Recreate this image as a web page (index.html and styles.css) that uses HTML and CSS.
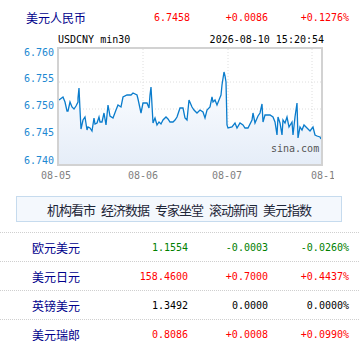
FILE: index.html
```html
<!DOCTYPE html>
<html lang="zh-CN">
<head>
<meta charset="UTF-8" />
<title>美元人民币</title>
<link rel="stylesheet" href="styles.css">
</head>
<body>
<div class="fx">
  <div class="quote">
    <span class="name">美元人民币</span>
    <span class="num up">6.7458</span>
    <span class="num up">+0.0086</span>
    <span class="num up">+0.1276%</span>
  </div>

  <div class="chart-title">
    <span>USDCNY min30</span>
    <span>2026-08-10 15:20:54</span>
  </div>

  <svg class="chart" width="334" height="144" viewBox="0 46 334 144">
    <defs>
      <linearGradient id="area" x1="0" y1="85" x2="0" y2="165" gradientUnits="userSpaceOnUse">
        <stop offset="0" stop-color="#fafcff" />
        <stop offset="1" stop-color="#e5edf8" />
      </linearGradient>
    </defs>
    <!-- grid -->
    <g class="grid">
      <line x1="59" y1="82" x2="321" y2="82" />
      <line x1="59" y1="109" x2="321" y2="109" />
      <line x1="59" y1="136" x2="321" y2="136" />
      <line x1="143" y1="49" x2="143" y2="164" />
      <line x1="228" y1="49" x2="228" y2="164" />
      <line x1="312" y1="49" x2="312" y2="164" />
    </g>
    <polygon class="area" points="59,100 63,97 65,102 67,111 68,111 70,102 72,107 74,109 76,106 78,102 78,98 79,88 80,110 81,129 83,120 85,117 87,130 88,127 90,128 92,131 94,118 95,124 97,123 99,117 100,122 102,122 104,113 106,125 108,105 110,116 113,118 116,110 118,105 121,107 123,97 127,95 131,95 133,93 137,95 138,99 141,113 143,103 147,103 149,108 150,95 151,87 152,105 153,123 155,118 157,125 159,122 161,124 163,120 166,117 168,119 170,122 173,122 175,120 177,117 180,108 183,108 185,118 187,120 189,100 192,107 194,110 197,113 200,110 203,112 205,118 207,110 210,107 212,97 213,102 215,100 217,105 219,100 221,95 222,85 224,72 225,76 226,82 227,125 228,128 232,127 235,123 237,128 240,123 243,125 245,128 248,128 252,120 253,113 255,123 258,116 260,113 262,104 263,122 265,115 270,115 273,117 275,122 277,135 278,117 280,123 282,135 283,120 285,123 287,117 289,127 292,122 293,135 295,117 297,103 298,138 300,127 302,130 304,125 307,128 310,131 313,127 315,135 317,136 320,137 321,139 321,164 59,164" />
    <polyline class="line" points="59,100 63,97 65,102 67,111 68,111 70,102 72,107 74,109 76,106 78,102 78,98 79,88 80,110 81,129 83,120 85,117 87,130 88,127 90,128 92,131 94,118 95,124 97,123 99,117 100,122 102,122 104,113 106,125 108,105 110,116 113,118 116,110 118,105 121,107 123,97 127,95 131,95 133,93 137,95 138,99 141,113 143,103 147,103 149,108 150,95 151,87 152,105 153,123 155,118 157,125 159,122 161,124 163,120 166,117 168,119 170,122 173,122 175,120 177,117 180,108 183,108 185,118 187,120 189,100 192,107 194,110 197,113 200,110 203,112 205,118 207,110 210,107 212,97 213,102 215,100 217,105 219,100 221,95 222,85 224,72 225,76 226,82 227,125 228,128 232,127 235,123 237,128 240,123 243,125 245,128 248,128 252,120 253,113 255,123 258,116 260,113 262,104 263,122 265,115 270,115 273,117 275,122 277,135 278,117 280,123 282,135 283,120 285,123 287,117 289,127 292,122 293,135 295,117 297,103 298,138 300,127 302,130 304,125 307,128 310,131 313,127 315,135 317,136 320,137 321,139" />
    <rect class="frame" x="58" y="48" width="264" height="117" />
    <text class="mark" x="271" y="152">sina.com</text>
    <!-- y axis -->
    <g class="y-axis">
      <text x="54" y="56">6.760</text>
      <text x="54" y="82">6.755</text>
      <text x="54" y="109">6.750</text>
      <text x="54" y="136">6.745</text>
      <text x="54" y="164">6.740</text>
    </g>
    <!-- x axis -->
    <g class="x-axis">
      <text x="41" y="179">08-05</text>
      <text x="128" y="179">08-06</text>
      <text x="212" y="179">08-07</text>
      <text x="311" y="179">08-1</text>
    </g>
  </svg>

  <div class="tabs">
    <a>机构看市</a>
    <a>经济数据</a>
    <a>专家坐堂</a>
    <a>滚动新闻</a>
    <a>美元指数</a>
  </div>

  <div class="rates">
    <div class="row">
      <span class="name">欧元美元</span>
      <span class="num down">1.1554</span>
      <span class="num down">-0.0003</span>
      <span class="num down">-0.0260%</span>
    </div>
    <div class="row">
      <span class="name">美元日元</span>
      <span class="num up">158.4600</span>
      <span class="num up">+0.7000</span>
      <span class="num up">+0.4437%</span>
    </div>
    <div class="row">
      <span class="name">英镑美元</span>
      <span class="num">1.3492</span>
      <span class="num">0.0000</span>
      <span class="num">0.0000%</span>
    </div>
    <div class="row">
      <span class="name">美元瑞郎</span>
      <span class="num up">0.8086</span>
      <span class="num up">+0.0008</span>
      <span class="num up">+0.0990%</span>
    </div>
  </div>
</div>
</body>
</html>
```

FILE: styles.css
```css
body {
  margin: 0;
  background: #fff;
  font-family: "Noto Sans CJK SC", sans-serif;
}
.fx {
  width: 359px;
}
.num {
  font-family: "DejaVu Sans Mono", monospace;
  font-size: 10px;
  text-align: right;
}
.up { color: #ff0000; }
.down { color: #008000; }
.name {
  color: #00008b;
  font-size: 12px;
}

.quote {
  display: grid;
  grid-template-columns: 84px 80px 78px 81px;
  align-items: center;
  height: 34px;
  padding-left: 26px;
}

.chart-title {
  display: flex;
  justify-content: space-between;
  width: 266px;
  margin-left: 58px;
  height: 12px;
  line-height: 12px;
  font-family: "DejaVu Sans Mono", monospace;
  font-size: 10px;
  color: #000;
}

.chart {
  display: block;
  overflow: hidden;
}
.chart text {
  font-family: "DejaVu Sans Mono", monospace;
  font-size: 10px;
}
.grid line {
  stroke: #dedede;
  stroke-width: 1;
  stroke-dasharray: 1 2;
}
.area { fill: url(#area); }
.line {
  fill: none;
  stroke: #0a7ccc;
  stroke-width: 1.3;
}
.frame {
  fill: none;
  stroke: #d2d2d2;
  stroke-width: 2;
}
.mark { fill: #555; }
.y-axis text {
  fill: #1e88d2;
  text-anchor: end;
}
.x-axis text { fill: #808080; }

.tabs {
  display: flex;
  justify-content: center;
  gap: 6px;
  height: 24px;
  margin: 6px 17px 0 16px;
  border: 1px solid #c6dbee;
  background: #f4f8fd;
  align-items: center;
}
.tabs a {
  color: #1e2638;
  font-size: 13px;
  letter-spacing: -1px;
  cursor: pointer;
}

.rates {
  margin-top: 10px;
}
.row {
  display: grid;
  grid-template-columns: 78px 78px 80px 81px;
  align-items: center;
  height: 28px;
  padding-left: 32px;
  border-top: 1px dotted #cfcfcf;
}
```
